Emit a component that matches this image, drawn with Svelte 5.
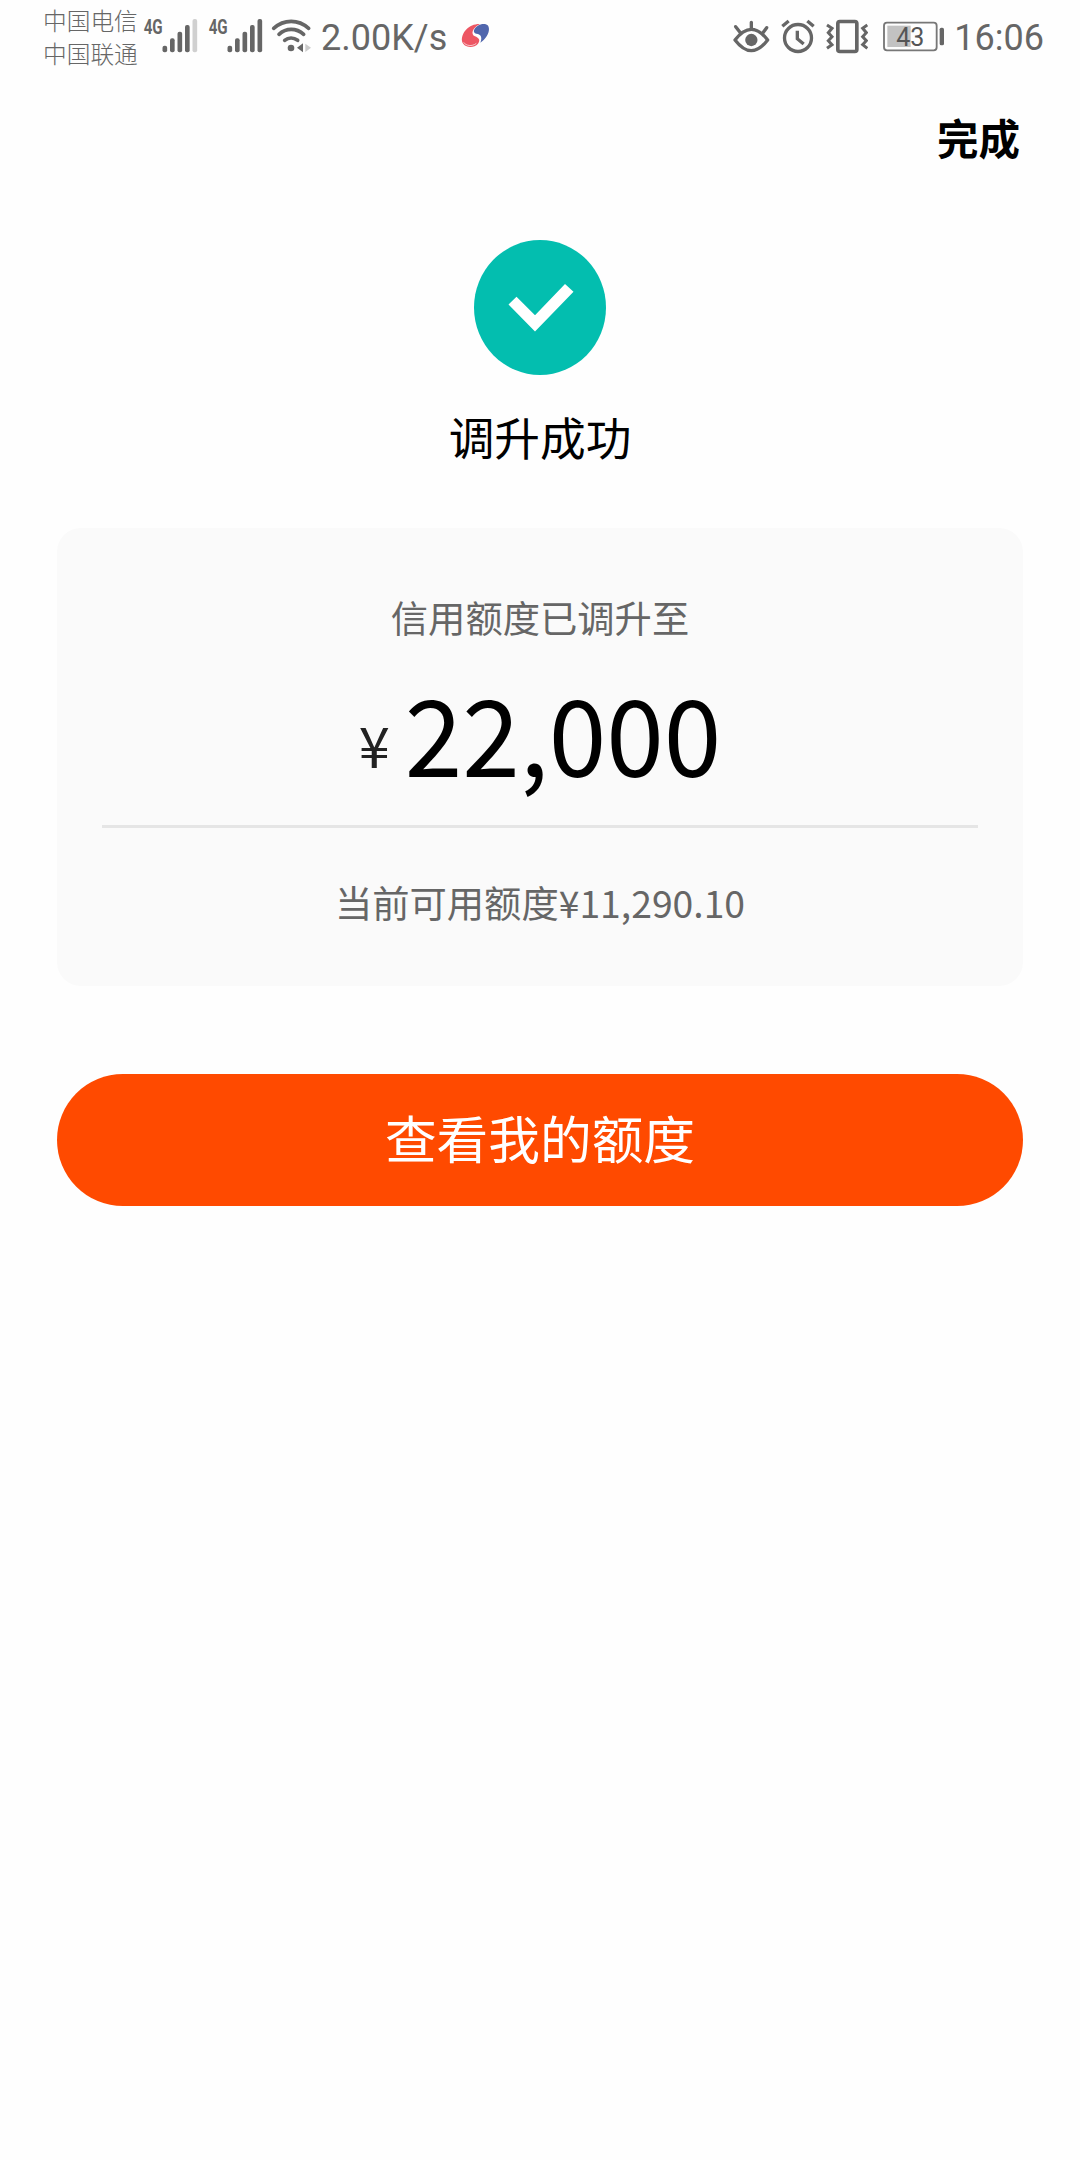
<script lang="ts">
  /**
   * Result page shown after a credit limit increase.
   */

  const carriers = ['中国电信', '中国联通'];
  const barTops = [137, 115, 95, 75, 57];

  let speed = '2.00K/s';
  let time = '16:06';
  let battery = 43;
  let limit = '22,000';
  let available = '11,290.10';
</script>

{#snippet signal(level: number)}
  <svg class="icon" width="56" height="75" viewBox="336 0 168 225" aria-hidden="true">
    <text class="net" x="341" y="101" textLength="57" lengthAdjust="spacingAndGlyphs">4G</text>
    {#each barTops as top, i}
      <rect
        x={397.5 + i * 22.5}
        y={top}
        width="14"
        height={157 - top}
        rx="6"
        fill={i < level ? '#666' : '#d0d0d0'}
      />
    {/each}
  </svg>
{/snippet}

<div class="page">
  <div class="status">
    <div class="carriers">
      {#each carriers as name}
        <span>{name}</span>
      {/each}
    </div>
    <div class="signals">
      {@render signal(4)}
      {@render signal(5)}
    </div>
    <svg class="icon wifi" width="41" height="75" viewBox="33 0 123 225" aria-hidden="true">
      <g fill="none" stroke="#666" stroke-width="11" stroke-linecap="round">
        <path d="M41 85C72 57 115 57 146 85" />
        <path d="M57 103C78 83 109 83 131 103" />
        <path d="M74 121C85 112 101 112 113 121" />
      </g>
      <circle cx="93" cy="144" r="10" fill="#666" />
      <path d="M111 143L129 130V157Z" fill="#666" />
      <path d="M136 131L153 143L136 156Z" fill="#ccc" />
    </svg>
    <span class="speed">{speed}</span>
    <svg class="icon" width="29" height="75" viewBox="604 0 87 225" aria-hidden="true">
      <path
        d="M661 72C628 71 604 98 607 123C611 144 642 146 655 131C664 120 656 113 646 109C632 103 638 83 661 72Z"
        fill="#ed5663"
      />
      <path
        d="M643 91C648 75 673 66 684 76C694 88 684 114 662 128C668 113 664 105 655 102C646 101 641 98 643 91Z"
        fill="#5066ad"
      />
      <path d="M612 127C618 137 637 141 650 130" fill="none" stroke="#fff" stroke-width="2" />
    </svg>

    <div class="right">
      <svg class="icon" width="37" height="75" viewBox="38 0 111 225" aria-hidden="true">
        <g fill="none" stroke="#666" stroke-width="10" stroke-linecap="round">
          <path d="M44 120Q93 56 142 120Q93 184 44 120Z" stroke-linejoin="round" />
          <path d="M93 67V86M46 80L59 97M139 83L128 98" />
        </g>
        <circle cx="93" cy="120" r="18.5" fill="#666" />
      </svg>
      <svg class="icon" width="34" height="75" viewBox="182 0 102 225" aria-hidden="true">
        <g fill="none" stroke="#666" stroke-width="10">
          <circle cx="233" cy="114" r="40.5" />
          <path d="M231 92V116L250 132M186 79L205 63M261 63L280 79" />
        </g>
      </svg>
      <svg class="icon" width="42" height="75" viewBox="317 0 126 225" aria-hidden="true">
        <g fill="none" stroke="#666">
          <rect x="352.500" y="64.500" width="57" height="90" rx="6" stroke-width="11" />
          <path
            d="M320 75L335 85L324 98L335 110L324 122L335 134L320 145M441 75L427 85L438 98L427 110L438 122L427 134L441 145"
            stroke-width="9"
          />
        </g>
      </svg>
      <svg class="icon battery" width="62" height="75" viewBox="40 0 186 225" aria-hidden="true">
        <rect x="43" y="68" width="158" height="83" rx="9" fill="none" stroke="#777" stroke-width="5.5" />
        <rect x="53" y="77" width={battery * 1.63} height="64" fill="#c2c2c2" />
        <rect x="210" y="83" width="13" height="53" rx="5" fill="#666" />
        <text class="level" x="122" y="137" text-anchor="middle">{battery}</text>
      </svg>
      <span class="time">{time}</span>
    </div>
  </div>

  <header>
    <button class="done">完成</button>
  </header>

  <main>
    <svg class="success" width="132" height="135" viewBox="0 0 132 135" aria-hidden="true">
      <ellipse cx="66" cy="67.500" rx="66" ry="67.500" fill="#03beaf" />
      <path d="M34.500 64.500L42.500 56.800L61 75.200L91 44L99.500 51.800L61 91.500Z" fill="#fff" />
    </svg>
    <h1>调升成功</h1>

    <section class="card">
      <p class="label">信用额度已调升至</p>
      <p class="amount"><span class="yen">¥</span><span class="value">{limit}</span></p>
      <p class="available">当前可用额度¥{available}</p>
    </section>

    <button class="primary">查看我的额度</button>
  </main>
</div>

<style>
  :global(body) {
    background: #fefefe;
  }

  .page {
    min-height: 2160px;
    font-family: 'Noto Sans CJK SC', sans-serif;
    color: #000;
  }

  button {
    border: none;
    background: none;
    padding: 0;
    margin: 0;
    font-family: inherit;
  }

  .status {
    display: flex;
    align-items: center;
    height: 75px;
    padding: 0 36px 0 43px;
    color: #666;
    white-space: nowrap;
  }

  .icon {
    display: block;
    flex: none;
  }

  .carriers {
    display: flex;
    flex-direction: column;
    width: 99px;
    font-size: 23.7px;
    font-weight: 300;
    line-height: 33px;
    padding-bottom: 1px;
  }

  .signals {
    display: flex;
    gap: 9px;
  }

  .net {
    font: bold 62px Roboto, sans-serif;
    fill: #666;
  }

  .wifi {
    margin-left: 8px;
  }

  .speed,
  .time {
    font-family: Roboto, sans-serif;
    font-size: 36px;
    line-height: 75px;
    padding-top: 1px;
  }

  .speed {
    width: 140px;
    margin-left: 9px;
  }

  .time {
    margin-left: -2px;
  }

  .right {
    display: flex;
    align-items: center;
    gap: 11px;
    margin-left: auto;
  }

  .battery {
    margin-left: 4px;
  }

  .level {
    font: 75px Roboto, sans-serif;
    fill: #555;
  }

  header {
    display: flex;
    justify-content: flex-end;
    height: 165px;
    padding-right: 60px;
    box-sizing: border-box;
  }

  .done {
    height: 123px;
    font-size: 41.5px;
    font-weight: 700;
    color: #000;
  }

  main {
    display: flex;
    flex-direction: column;
    align-items: center;
    padding: 0 57px;
  }

  .success {
    display: block;
  }

  h1 {
    margin: 31px 0 62px;
    font-size: 45.7px;
    font-weight: 400;
    line-height: 60px;
  }

  .card {
    align-self: stretch;
    box-sizing: border-box;
    height: 458px;
    padding: 64px 45px 0;
    border-radius: 24px;
    background: #fafafa;
    text-align: center;
  }

  p {
    margin: 0;
  }

  .label,
  .available {
    font-size: 37.3px;
    line-height: 50px;
    color: #666;
  }

  .amount {
    height: 183px;
    border-bottom: 3px solid #e5e5e5;
    font-size: 103.7px;
    line-height: 180px;
  }

  .yen {
    margin-right: 15px;
    font-size: 56px;
    line-height: 1;
    vertical-align: 9px;
    color: #222;
  }

  /* digits are slightly taller than the default face */
  .value {
    display: inline-block;
    transform: scaleY(1.025);
    transform-origin: 50% 75%;
  }

  .available {
    padding-top: 49px;
  }

  .primary {
    align-self: stretch;
    height: 132px;
    margin-top: 88px;
    padding-bottom: 8px;
    border-radius: 66px;
    background: #ff4a00;
    color: #fff;
    font-size: 51.7px;
  }
</style>
